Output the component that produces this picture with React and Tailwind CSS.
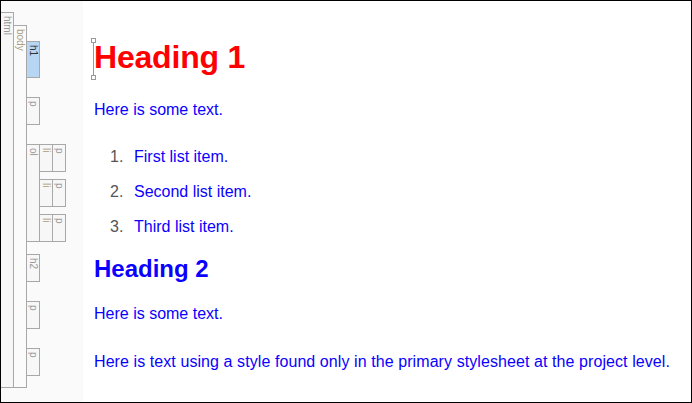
import React from 'react';

const Box = ({ label, className = '', labelClass = 'text-[#999]' }) => (
  <div className={`w-[13px] border-t border-r border-b border-[#a8a8a8] flex justify-center pt-[3px] ${className}`}>
    <span className={`[writing-mode:vertical-rl] text-[10px] leading-[12px] ${labelClass}`}>{label}</span>
  </div>
);

const ListRow = ({ className = '' }) => (
  <div className={`flex ${className}`}>
    <Box label="li" className="h-[28px] bg-[#f7f7f7]" labelClass="text-[#a89c80]" />
    <Box label="p" className="h-[28px] bg-[#f7f7f7]" />
  </div>
);

const items = ['First list item.', 'Second list item.', 'Third list item.'];

export default function App() {
  return (
    <div
      className="relative w-[692px] h-[403px] border border-black bg-white flex overflow-hidden"
      style={{ fontFamily: '"Liberation Sans", Arial, sans-serif' }}
    >
      {/* element tree */}
      <div className="w-[82px] shrink-0 bg-[#fafafa] pt-[11px] flex items-start">
        <Box label="html" className="h-[376px] bg-[#f7f7f7]" />
        <Box label="body" className="mt-[13px] h-[363px] bg-[#fbfbfb]" labelClass="text-[#a89c80]" />
        <div className="mt-[29px] flex flex-col">
          <Box label="h1" className="h-[37px] bg-[#b6d6f4]" labelClass="text-[#333]" />
          <Box label="p" className="mt-[19px] h-[28px] bg-[#f7f7f7]" />
          <div className="mt-[19px] flex">
            <Box label="ol" className="h-[98px] bg-[#f7f7f7]" />
            <div className="flex flex-col">
              <ListRow />
              <ListRow className="mt-[7px]" />
              <ListRow className="mt-[7px]" />
            </div>
          </div>
          <Box label="h2" className="mt-[12px] h-[28px] bg-[#f7f7f7]" />
          <Box label="p" className="mt-[19px] h-[28px] bg-[#f7f7f7]" />
          <Box label="p" className="mt-[19px] h-[28px] bg-[#f7f7f7]" />
        </div>
      </div>

      {/* document */}
      <div className="flex-1 pl-[11px] pt-[40px] text-[#0a00ff]">
        <h1 className="text-[32px] leading-[32px] font-bold text-[#ff0000] tracking-[-0.2px]">Heading 1</h1>
        <p className="mt-[27px] text-[16px] leading-[20px]">Here is some text.</p>
        <ol className="mt-[27px]">
          {items.map((t, i) => (
            <li key={t} className={`flex text-[16px] leading-[20px] ${i ? 'mt-[15px]' : ''}`}>
              <span className="ml-[16px] w-[24px] text-[#555]">{i + 1}.</span>
              <span>{t}</span>
            </li>
          ))}
        </ol>
        <h2 className="mt-[18px] text-[24px] leading-[28px] font-bold">Heading 2</h2>
        <p className="mt-[21px] text-[16px] leading-[20px]">Here is some text.</p>
        <p className="mt-[28px] text-[16px] leading-[20px] whitespace-nowrap tracking-[0.08px]">
          Here is text using a style found only in the primary stylesheet at the project level.
        </p>
      </div>

      {/* selection handles on h1 */}
      <div className="absolute left-[90px] top-[37px] w-[5px] h-[5px] border border-[#999] bg-white" />
      <div className="absolute left-[92px] top-[42px] w-px h-[32px] bg-[#999]" />
      <div className="absolute left-[90px] top-[74px] w-[5px] h-[5px] border border-[#999] bg-white" />
    </div>
  );
}
